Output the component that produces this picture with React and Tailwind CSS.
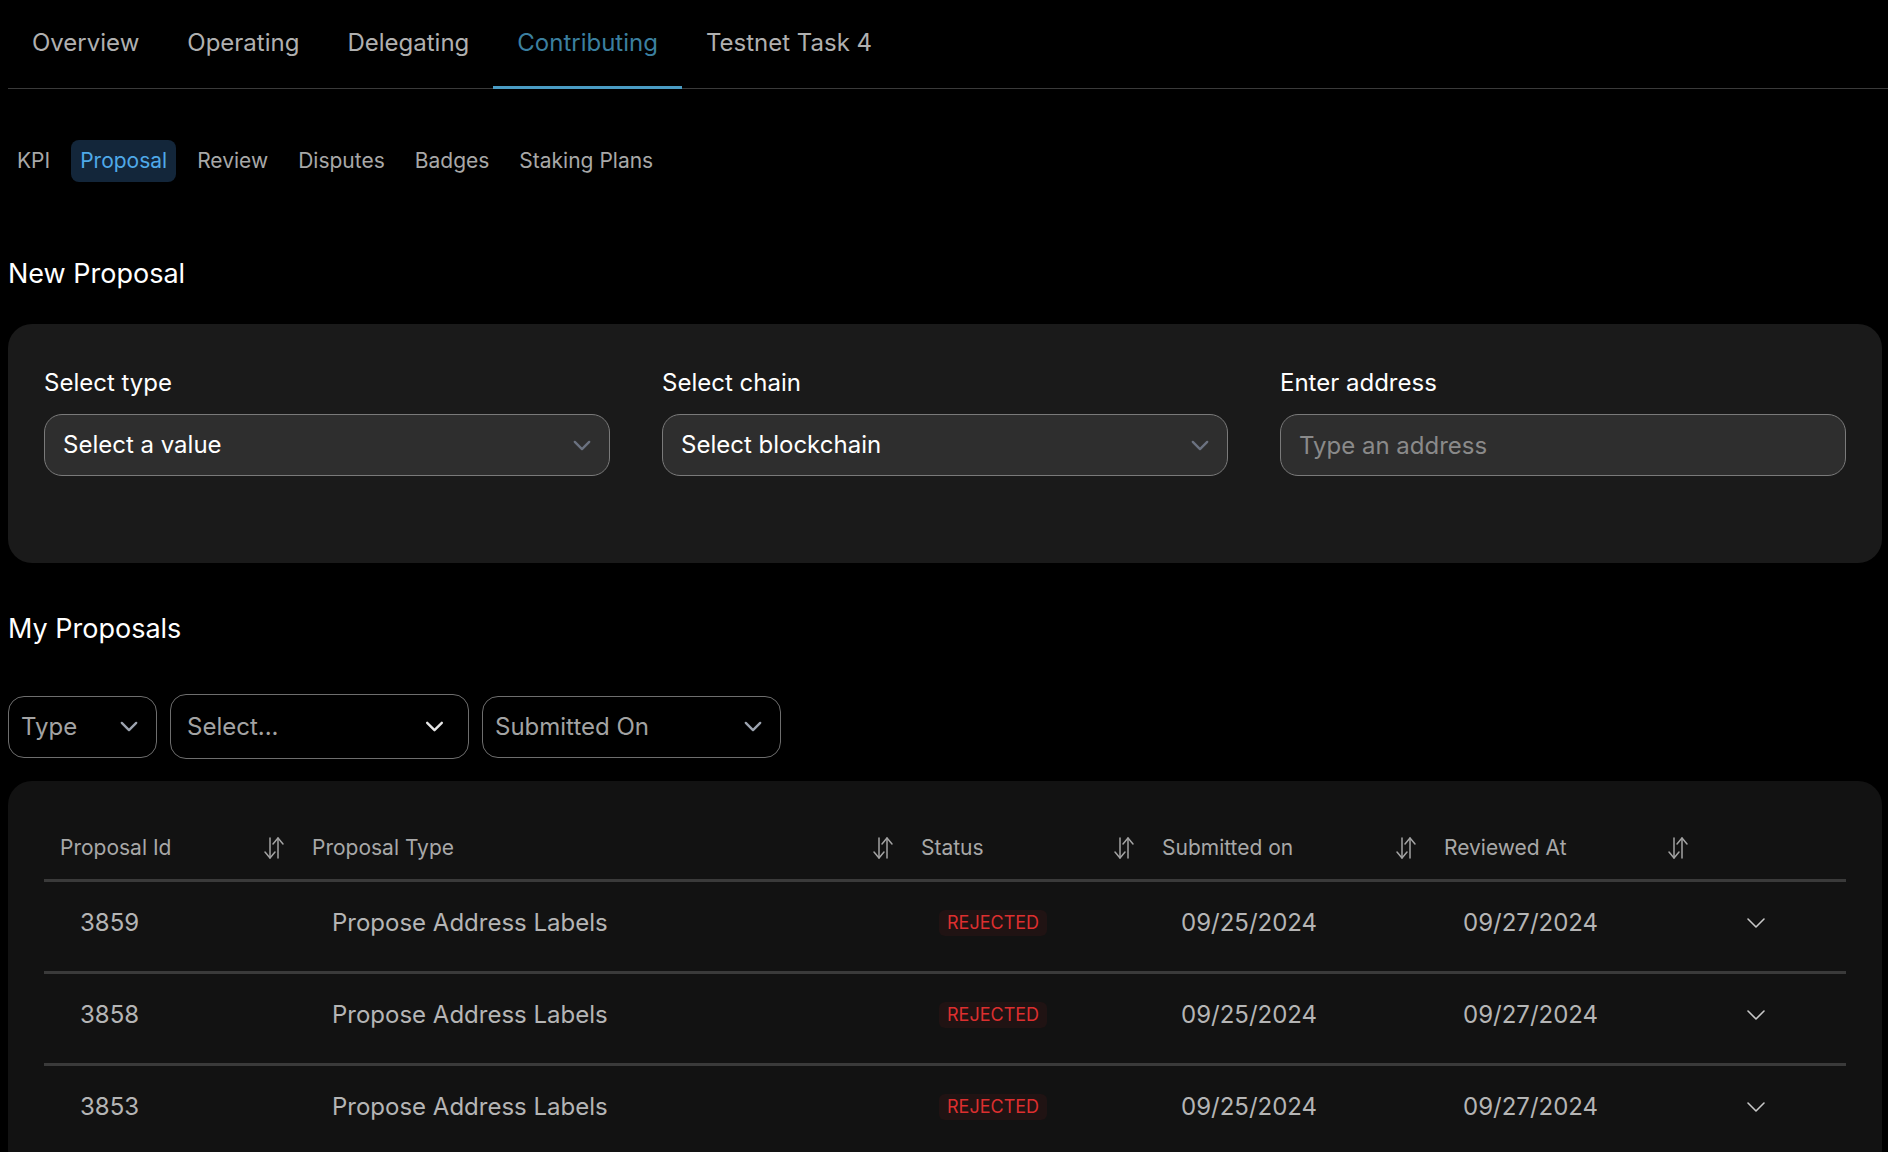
import React from 'react';

const font = { fontFamily: 'Inter, "Noto Sans", sans-serif' };

const topTabs = ['Overview', 'Operating', 'Delegating', 'Contributing', 'Testnet Task 4'];
const subTabs = ['KPI', 'Proposal', 'Review', 'Disputes', 'Badges', 'Staking Plans'];

const rows = [
  { id: '3859', type: 'Propose Address Labels', status: 'REJECTED', submitted: '09/25/2024', reviewed: '09/27/2024' },
  { id: '3858', type: 'Propose Address Labels', status: 'REJECTED', submitted: '09/25/2024', reviewed: '09/27/2024' },
  { id: '3853', type: 'Propose Address Labels', status: 'REJECTED', submitted: '09/25/2024', reviewed: '09/27/2024' },
];

function Chevron({ className }) {
  return (
    <svg viewBox="0 0 20 12" className={className} fill="none" stroke="currentColor" strokeWidth="2.6" strokeLinecap="round" strokeLinejoin="round">
      <path d="M2 2l8 8 8-8" />
    </svg>
  );
}

function SortIcon() {
  return (
    <svg viewBox="0 0 24 24" className="w-[28px] h-[24px] text-[#a3a3a3]" fill="none" stroke="currentColor" strokeWidth="1.5" strokeLinecap="round" strokeLinejoin="round">
      <path d="M8 2v20" />
      <path d="M3 16l5 6 5-6" />
      <path d="M16 22V2" />
      <path d="M11 8l5-6 5 6" />
    </svg>
  );
}

function Field({ label, children }) {
  return (
    <div className="flex flex-col">
      <label className="text-[24px] leading-8 text-white mb-[15px]">{label}</label>
      {children}
    </div>
  );
}

const cols = 'grid grid-cols-[252px_609px_241px_282px_272px_1fr]';

export default function App() {
  return (
    <div style={font} className="min-h-screen bg-black pl-2 pr-[6px] pb-10">
      {/* Top tabs */}
      <nav className="flex border-b border-[#3a3a3a] -mr-[6px]">
        {topTabs.map((t) => (
          <div
            key={t}
            className={`h-[89px] -mb-px px-6 flex items-center border-b-[3px] text-[24px] ${
              t === 'Contributing' ? 'border-[#4a9cc4] text-[#3b7f9f]' : 'border-transparent text-[#b0b0b0]'
            }`}
          >
            {t}
          </div>
        ))}
      </nav>

      {/* Sub tabs */}
      <div className="flex gap-3 mt-[51px]">
        {subTabs.map((t) => (
          <div
            key={t}
            className={`h-[42px] px-[9px] flex items-center rounded-lg text-[21px] ${
              t === 'Proposal' ? 'bg-[#13263a] text-[#4fa9e8]' : 'text-[#a8a8a8]'
            }`}
          >
            {t}
          </div>
        ))}
      </div>

      {/* New proposal */}
      <h2 className="mt-[76px] text-[27px] leading-8 text-white">New Proposal</h2>
      <div className="mt-[34px] rounded-3xl bg-[#1a1a1a] px-9 pt-[43px] pb-[87px] grid grid-cols-3 gap-[52px]">
        <Field label="Select type">
          <div className="h-[62px] rounded-[18px] border border-[#7a7a7a] bg-[#2e2e2e] pl-[18px] pr-[18px] flex items-center justify-between">
            <span className="text-[24px] text-white">Select a value</span>
            <Chevron className="w-[18px] h-[11px] text-[#6b7280]" />
          </div>
        </Field>
        <Field label="Select chain">
          <div className="h-[62px] rounded-[18px] border border-[#7a7a7a] bg-[#2e2e2e] pl-[18px] pr-[18px] flex items-center justify-between">
            <span className="text-[24px] text-white">Select blockchain</span>
            <Chevron className="w-[18px] h-[11px] text-[#6b7280]" />
          </div>
        </Field>
        <Field label="Enter address">
          <input
            placeholder="Type an address"
            className="h-[62px] rounded-[18px] border border-[#7a7a7a] bg-[#2e2e2e] pl-[18px] text-[24px] text-white placeholder:text-[#8a8a8a] outline-none"
          />
        </Field>
      </div>

      {/* My proposals */}
      <h2 className="mt-[50px] text-[27px] leading-8 text-white">My Proposals</h2>
      <div className="mt-[49px] flex items-center gap-[13px]">
        <div className="w-[149px] h-[62px] rounded-2xl border border-[#6e6e6e] pl-3 pr-[18px] flex items-center justify-between">
          <span className="text-[24px] text-[#a3a3a3]">Type</span>
          <Chevron className="w-[18px] h-[11px] text-[#9ca3af]" />
        </div>
        <div className="w-[299px] h-[65px] rounded-2xl border border-[#6e6e6e] pl-4 pr-6 flex items-center justify-between">
          <span className="text-[24px] text-[#a3a3a3]">Select...</span>
          <Chevron className="w-[19px] h-[11px] text-[#e5e5e5]" />
        </div>
        <div className="w-[299px] h-[62px] rounded-2xl border border-[#6e6e6e] pl-3 pr-[18px] flex items-center justify-between">
          <span className="text-[24px] text-[#a3a3a3]">Submitted On</span>
          <Chevron className="w-[18px] h-[11px] text-[#9ca3af]" />
        </div>
      </div>

      {/* Table */}
      <div className="mt-[22px] rounded-3xl bg-[#121212] px-9 pt-9 pb-4">
        <div className={`${cols} h-[65px] items-center border-b-[3px] border-[#3a3a3a]`}>
          {['Proposal Id', 'Proposal Type', 'Status', 'Submitted on', 'Reviewed At'].map((h) => (
            <div key={h} className="flex items-center justify-between pl-4 pr-2">
              <span className="text-[21px] text-[#a8a8a8]">{h}</span>
              <SortIcon />
            </div>
          ))}
          <div />
        </div>
        {rows.map((r) => (
          <div key={r.id} className={`${cols} h-[92px] pb-2 items-center border-b-[3px] border-[#3a3a3a]`}>
            <div className="pl-9 text-[24px] text-[#b5b5b5]">{r.id}</div>
            <div className="pl-9 text-[24px] text-[#b5b5b5]">{r.type}</div>
            <div className="pl-[34px]">
              <span className="inline-flex items-center h-[26px] px-[8px] rounded-md bg-[#201313] text-[18px] text-[#dc2f2f]">
                {r.status}
              </span>
            </div>
            <div className="pl-[35px] text-[24px] text-[#b5b5b5]">{r.submitted}</div>
            <div className="pl-[35px] text-[24px] text-[#b5b5b5]">{r.reviewed}</div>
            <div className="pl-[46px]">
              <svg viewBox="0 0 20 12" className="w-[20px] h-[12px] text-[#c8c8c8]" fill="none" stroke="currentColor" strokeWidth="1.6" strokeLinecap="round" strokeLinejoin="round">
                <path d="M2 2l8 8 8-8" />
              </svg>
            </div>
          </div>
        ))}
      </div>
    </div>
  );
}
